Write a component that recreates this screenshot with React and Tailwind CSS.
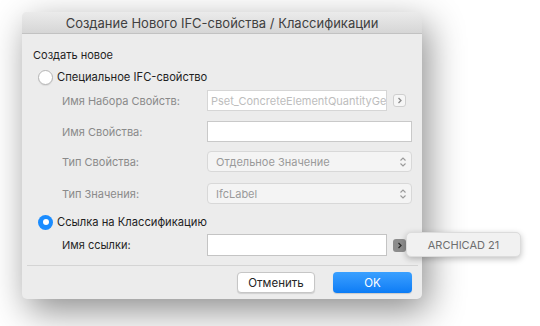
export default function App() {
  return (
    <div className="w-[540px] h-[326px] bg-white pt-[12px] pl-[22px] font-['Inter',sans-serif] text-[11px] leading-[14px] text-[#262626]">
      <div className="relative w-[400px] h-[287px] rounded-[5px] bg-[#ececec] shadow-[6px_12px_36px_rgba(0,0,0,0.45)] flex flex-col">
        <div className="h-[22px] flex items-center justify-center rounded-t-[5px] bg-gradient-to-b from-[#ebebeb] to-[#d6d6d6] border-b border-[#c2c2c2] text-[13px] text-[#404040]">
          Создание Нового IFC-свойства / Классификации
        </div>

        <div className="flex flex-col pl-[11px] pr-[10px]">
          <div className="mt-[14px] h-[14px] flex items-center text-[#1f1f1f]">Создать новое</div>

          <Radio checked={false} label="Специальное IFC-свойство" className="mt-[7px]" />

          <Row label="Имя Набора Свойств:" className="mt-[5px]">
            <div className="w-[180px] h-[21px] bg-white border border-[#d6d6d6] text-[#bdbdbd] px-[3px] flex items-center overflow-hidden whitespace-nowrap">
              Pset_ConcreteElementQuantityGeneral
            </div>
            <ArrowBtn dark={false} />
          </Row>

          <Row label="Имя Свойства:" className="mt-[10px]">
            <div className="w-[205px] h-[21px] bg-white border border-[#c9c9c9]" />
          </Row>

          <Row label="Тип Свойства:" className="mt-[9px]">
            <Popup text="Отдельное Значение" />
          </Row>

          <Row label="Тип Значения:" className="mt-[11px]">
            <Popup text="IfcLabel" />
          </Row>

          <Radio checked label="Ссылка на Классификацию" className="mt-[10px]" />

          <Row label="Имя ссылки:" dark className="mt-[4px]">
            <div className="w-[180px] h-[22px] bg-white border border-[#c4c4c4]" />
            <ArrowBtn dark />
          </Row>

          <div className="mt-[9px] mx-[-6px] border-t border-[#d4d4d4]" />

          <div className="mt-[6px] flex justify-end gap-[18px]">
            <button className="w-[78px] h-[21px] rounded-[4px] bg-white border border-[#c6c6c6] shadow-[0_1px_1px_rgba(0,0,0,0.12)] text-[11.5px] text-[#262626]">
              Отменить
            </button>
            <button className="w-[79px] h-[21px] rounded-[4px] bg-gradient-to-b from-[#3aa0ff] to-[#0a7cf5] text-white text-[11.5px] shadow-[0_1px_1px_rgba(0,0,0,0.15)]">
              OK
            </button>
          </div>
        </div>

        <div className="absolute left-[384px] top-[220px] w-[115px] h-[25px] rounded-[5px] bg-[#f1f1f1] border border-[#dcdcdc] shadow-[0_2px_6px_rgba(0,0,0,0.25)] flex items-center justify-center text-[11px] text-[#6e6e6e]">
          ARCHICAD 21
        </div>
      </div>
    </div>
  );
}

function Radio({ checked, label, className }) {
  return (
    <div className={"flex items-center h-[16px] " + className}>
      {checked ? (
        <div className="w-[15px] h-[15px] ml-[5px] rounded-full bg-[#1a8cff] flex items-center justify-center">
          <div className="w-[6px] h-[6px] rounded-full bg-white" />
        </div>
      ) : (
        <div className="w-[15px] h-[15px] ml-[5px] rounded-full bg-white border border-[#b5b5b5] shadow-[0_1px_1px_rgba(0,0,0,0.08)]" />
      )}
      <span className="ml-[4px] text-[11.2px] text-[#1f1f1f]">{label}</span>
    </div>
  );
}

function Row({ label, children, className, dark }) {
  return (
    <div className={"flex items-center " + className}>
      <div className={"w-[174px] pl-[29px] " + (dark ? "text-[#262626]" : "text-[#8a8a8a]")}>{label}</div>
      {children}
    </div>
  );
}

function ArrowBtn({ dark }) {
  return (
    <div
      className={
        "ml-[6px] w-[13px] h-[13px] rounded-[3px] flex items-center justify-center " +
        (dark ? "bg-[#8c8c8c]" : "bg-[#f6f6f6] border border-[#cfcfcf]")
      }
    >
      <svg width="6" height="7" viewBox="0 0 6 7">
        <path d="M1.5 1 L4 3.5 L1.5 6" fill="none" stroke={dark ? "#2a2a2a" : "#8a8a8a"} strokeWidth="1.3" />
      </svg>
    </div>
  );
}

function Popup({ text }) {
  return (
    <div className="w-[205px] h-[21px] rounded-[4px] bg-[#f4f4f4] border border-[#d8d8d8] flex items-center justify-between pl-[8px] pr-[4px] text-[#9a9a9a]">
      <span>{text}</span>
      <svg width="8" height="12" viewBox="0 0 8 12">
        <path d="M1.5 4.5 L4 2 L6.5 4.5 M1.5 7.5 L4 10 L6.5 7.5" fill="none" stroke="#9a9a9a" strokeWidth="1.1" />
      </svg>
    </div>
  );
}
